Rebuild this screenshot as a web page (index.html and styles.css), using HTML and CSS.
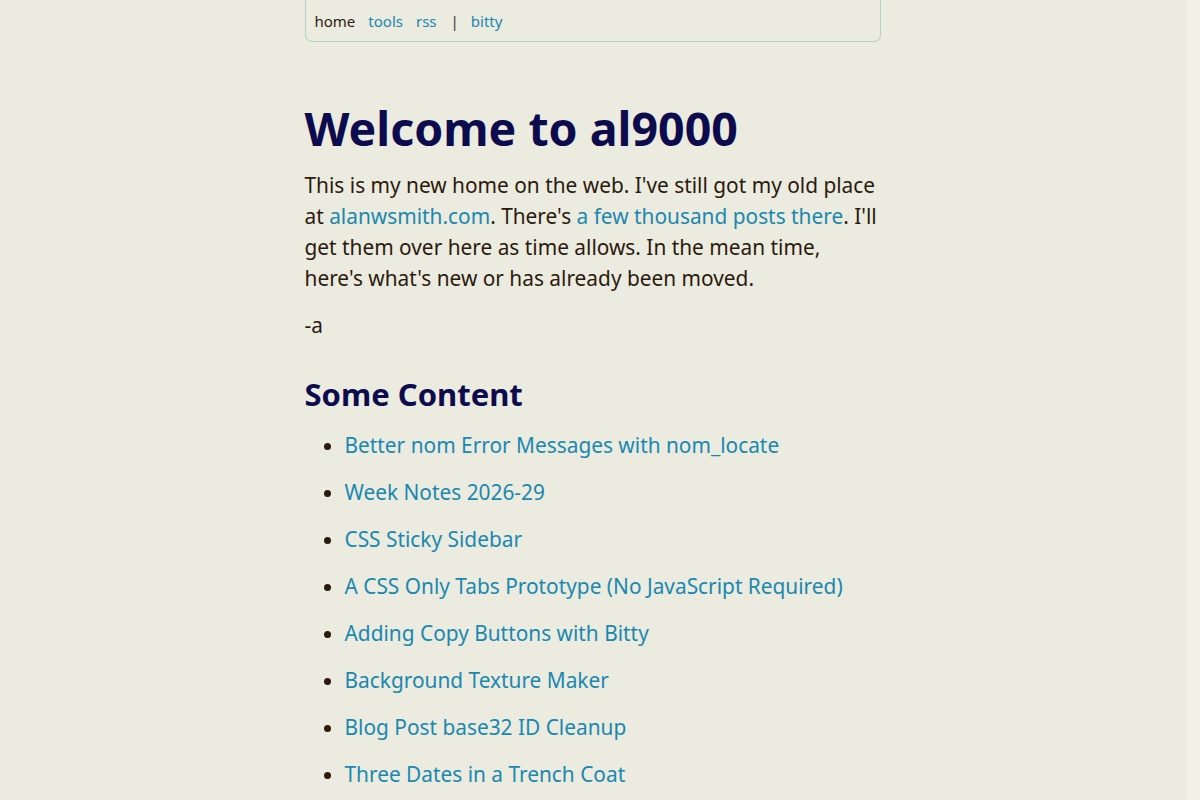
FILE: index.html
```html
<!DOCTYPE html>
<html lang="en">
<head>
<meta charset="utf-8">
<title>al9000</title>
<link rel="stylesheet" href="styles.css">
</head>
<body>
<div class="page">
  <nav class="nav">
    <span class="current">home</span>
    <a href="#">tools</a>
    <a href="#">rss</a>
    <span class="sep">|</span>
    <a href="#">bitty</a>
  </nav>
  <main class="main">
    <h1 class="title">Welcome to al9000</h1>
    <p class="text">This is my new home on the web. I've still got my old place at <a href="#">alanwsmith.com</a>. There's <a href="#">a few thousand posts there</a>. I'll get them over here as time allows. In the mean time, here's what's new or has already been moved.</p>
    <p class="text">-a</p>
    <h2 class="subtitle">Some Content</h2>
    <ul class="posts">
      <li><a href="#">Better nom Error Messages with nom_locate</a></li>
      <li><a href="#">Week Notes 2026-29</a></li>
      <li><a href="#">CSS Sticky Sidebar</a></li>
      <li><a href="#">A CSS Only Tabs Prototype (No JavaScript Required)</a></li>
      <li><a href="#">Adding Copy Buttons with Bitty</a></li>
      <li><a href="#">Background Texture Maker</a></li>
      <li><a href="#">Blog Post base32 ID Cleanup</a></li>
      <li><a href="#">Three Dates in a Trench Coat</a></li>
      <li><a href="#">Notes on Static Site Generators</a></li>
      <li><a href="#">Minimal Rust CLI Template</a></li>
    </ul>
  </main>
</div>
</body>
</html>
```
FILE: styles.css
```css
html {
  background: #f1f1e5;
}
body {
  margin: 0 15px 0 0;
  min-height: 100vh;
  font-family: "Noto Sans", sans-serif;
  color: #2b1a0e;
  background: #ebebdf;
  box-shadow: 1px 0 2px rgba(0, 0, 0, 0.04);
}
a {
  color: #1a88b0;
  text-decoration: none;
}
.page {
  width: 576px;
  margin: 0 auto;
}
.nav {
  margin-top: -8px;
  border: 1px solid #b2d3c4;
  border-top: none;
  border-radius: 0 0 7px 7px;
  padding: 19px 9px 10px;
  font-size: 15px;
  line-height: 20px;
  display: flex;
  gap: 13px;
}
.nav .current {
  color: #2b1a0e;
}
.nav .sep {
  color: #3a3a3a;
  margin: 0 -1px 0 1px;
}
.main {
  padding-top: 54px;
}
.title {
  margin: 0 0 10px;
  font-size: 46.5px;
  line-height: 64px;
  font-weight: 700;
  color: #0b0b4d;
}
.text {
  margin: 0 0 16px;
  font-size: 20.85px;
  line-height: 31px;
}
.subtitle {
  margin: 31px 0 14px;
  font-size: 31px;
  line-height: 44px;
  font-weight: 700;
  color: #0b0b4d;
}
.posts {
  margin: 0;
  padding-left: 40px;
  font-size: 20.85px;
  line-height: 31px;
}
.posts li {
  margin-bottom: 16px;
}
```
